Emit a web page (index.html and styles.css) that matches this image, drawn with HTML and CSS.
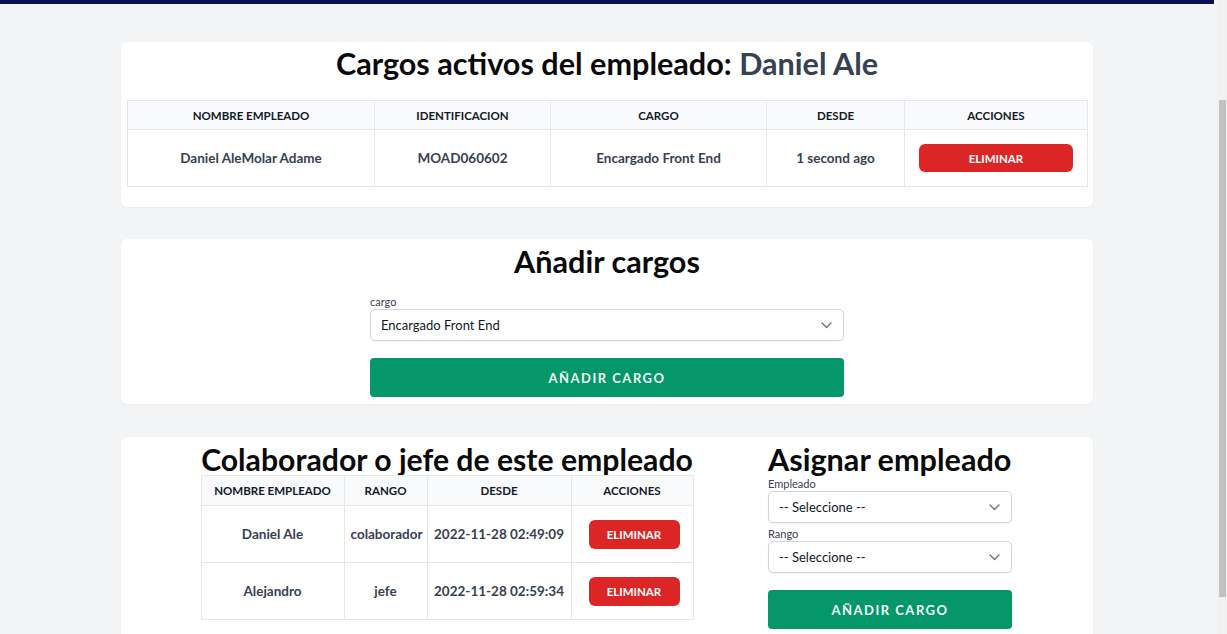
FILE: index.html
```html
<!DOCTYPE html>
<html lang="es">
<head>
<meta charset="utf-8">
<title>Cargos</title>
<link rel="stylesheet" href="styles.css">
</head>
<body>
<div class="topbar"></div>
<main class="page">
  <section class="card card-cargos">
    <h2 class="title">Cargos activos del empleado: <span class="title-name">Daniel Ale</span></h2>
    <table class="tbl tbl-main">
      <colgroup>
        <col style="width:247px"><col style="width:176px"><col style="width:216px"><col style="width:138px"><col style="width:183px">
      </colgroup>
      <thead>
        <tr><th>Nombre empleado</th><th>Identificacion</th><th>Cargo</th><th>Desde</th><th>Acciones</th></tr>
      </thead>
      <tbody>
        <tr>
          <td>Daniel AleMolar Adame</td>
          <td>MOAD060602</td>
          <td>Encargado Front End</td>
          <td>1 second ago</td>
          <td><button class="btn-del">ELIMINAR</button></td>
        </tr>
      </tbody>
    </table>
  </section>

  <section class="card card-add">
    <h2 class="title">Añadir cargos</h2>
    <div class="form-narrow">
      <label class="lbl">cargo</label>
      <div class="select">
        <span>Encargado Front End</span>
        <svg class="chev" width="11" height="7" viewBox="0 0 11 7"><path d="M1 1l4.5 4.5L10 1" fill="none" stroke="#6b7280" stroke-width="1.4" stroke-linecap="round" stroke-linejoin="round"/></svg>
      </div>
      <button class="btn-green">AÑADIR CARGO</button>
    </div>
  </section>

  <section class="card card-split">
    <div class="col-left">
      <h2 class="title title-tight title-rel">Colaborador o jefe de este empleado</h2>
      <table class="tbl tbl-rel">
        <colgroup>
          <col style="width:143px"><col style="width:83px"><col style="width:144px"><col style="width:122px">
        </colgroup>
        <thead>
          <tr><th>Nombre empleado</th><th>Rango</th><th>Desde</th><th>Acciones</th></tr>
        </thead>
        <tbody>
          <tr><td>Daniel Ale</td><td>colaborador</td><td>2022-11-28 02:49:09</td><td><button class="btn-del">ELIMINAR</button></td></tr>
          <tr><td>Alejandro</td><td>jefe</td><td>2022-11-28 02:59:34</td><td><button class="btn-del">ELIMINAR</button></td></tr>
        </tbody>
      </table>
    </div>
    <div class="col-right">
      <h2 class="title title-tight title-left">Asignar empleado</h2>
      <label class="lbl">Empleado</label>
      <div class="select">
        <span>-- Seleccione --</span>
        <svg class="chev" width="11" height="7" viewBox="0 0 11 7"><path d="M1 1l4.5 4.5L10 1" fill="none" stroke="#6b7280" stroke-width="1.4" stroke-linecap="round" stroke-linejoin="round"/></svg>
      </div>
      <label class="lbl lbl-gap">Rango</label>
      <div class="select">
        <span>-- Seleccione --</span>
        <svg class="chev" width="11" height="7" viewBox="0 0 11 7"><path d="M1 1l4.5 4.5L10 1" fill="none" stroke="#6b7280" stroke-width="1.4" stroke-linecap="round" stroke-linejoin="round"/></svg>
      </div>
      <button class="btn-green">AÑADIR CARGO</button>
    </div>
  </section>
</main>
<div class="scrollbar"><div class="thumb"></div></div>
</body>
</html>
```

FILE: styles.css
```css
* { box-sizing: border-box; }
html, body { margin: 0; padding: 0; }
body {
  background: #f3f4f6;
  font-family: Lato, "Noto Sans", Arial, sans-serif;
  color: #111827;
  padding-right: 13px;
  height: 634px;
  overflow: hidden;
}
.topbar {
  height: 4px;
  background: #0b1150;
}
.page {
  width: 972px;
  margin: 38px auto 0;
  display: flex;
  flex-direction: column;
  gap: 32px;
}
.card {
  background: #fff;
  border-radius: 6px;
  box-shadow: 0 1px 2px rgba(0,0,0,0.05);
  padding: 4px 6px;
}
.title {
  margin: 0;
  font-size: 30.6px;
  line-height: 36px;
  font-weight: 700;
  text-align: center;
  color: #0a0a0a;
}
.title-name { color: #374151; }
.tbl {
  border-collapse: collapse;
  table-layout: fixed;
}
.tbl th, .tbl td {
  border: 1px solid #e5e7eb;
  text-align: center;
  padding: 0 14px;
}
.tbl th {
  background: #f9fafb;
  font-size: 11.5px;
  font-weight: 700;
  text-transform: uppercase;
  color: #111827;
  height: 29px;
}
.tbl td {
  font-size: 13.5px;
  font-weight: 700;
  color: #374151;
  height: 57px;
}
.tbl-main { width: 960px; margin: 18px 0 16px; }
.tbl-rel { width: 492px; }
.tbl-rel th { height: 30px; padding: 0 6px; }
.tbl-rel td { padding: 0 6px; }
.btn-del {
  display: block;
  width: 100%;
  height: 28px;
  border: 0;
  border-radius: 6px;
  background: #dc2626;
  color: #fff;
  font-family: inherit;
  font-size: 11.5px;
  font-weight: 700;
  cursor: pointer;
}
.tbl-rel .btn-del { width: 91px; height: 29px; margin: 0 auto; position: relative; left: 2px; }

.card-add { padding: 5px 6px 7px; }
.form-narrow {
  width: 474px;
  margin: 14px auto 0;
  display: flex;
  flex-direction: column;
}
.lbl {
  display: block;
  font-size: 11px;
  line-height: 15px;
  color: #374151;
}
.lbl-gap { margin-top: 3px; }
.select {
  height: 32px;
  border: 1px solid #d1d5db;
  border-radius: 5px;
  box-shadow: 0 1px 2px rgba(0,0,0,0.05);
  display: flex;
  align-items: center;
  justify-content: space-between;
  padding: 0 11px 0 10px;
  font-size: 13px;
  color: #111827;
  background: #fff;
}
.btn-green {
  margin-top: 17px;
  height: 39px;
  border: 0;
  border-radius: 4px;
  background: #059669;
  color: #f0fdf4;
  font-family: inherit;
  font-size: 13px;
  font-weight: 700;
  letter-spacing: 1.5px;
  cursor: pointer;
}
.card-split {
  display: grid;
  grid-template-columns: 2fr 1fr;
  align-items: start;
  margin-top: 1px;
  padding: 7px 6px 40px;
}
.col-left {
  display: flex;
  flex-direction: column;
  align-items: center;
}
.col-right {
  display: flex;
  flex-direction: column;
  width: 244px;
  margin-left: 1px;
}
.title-tight { line-height: 32px; }
.title-rel { line-height: 31px; font-size: 30.2px; }
.title-left { text-align: left; }

.scrollbar {
  position: fixed;
  top: 0;
  right: 0;
  width: 10px;
  height: 100%;
  background: #f1f1f1;
}
.thumb {
  margin: 100px 0 0 2px;
  width: 7px;
  height: 497px;
  background: #c1c1c1;
}
```
